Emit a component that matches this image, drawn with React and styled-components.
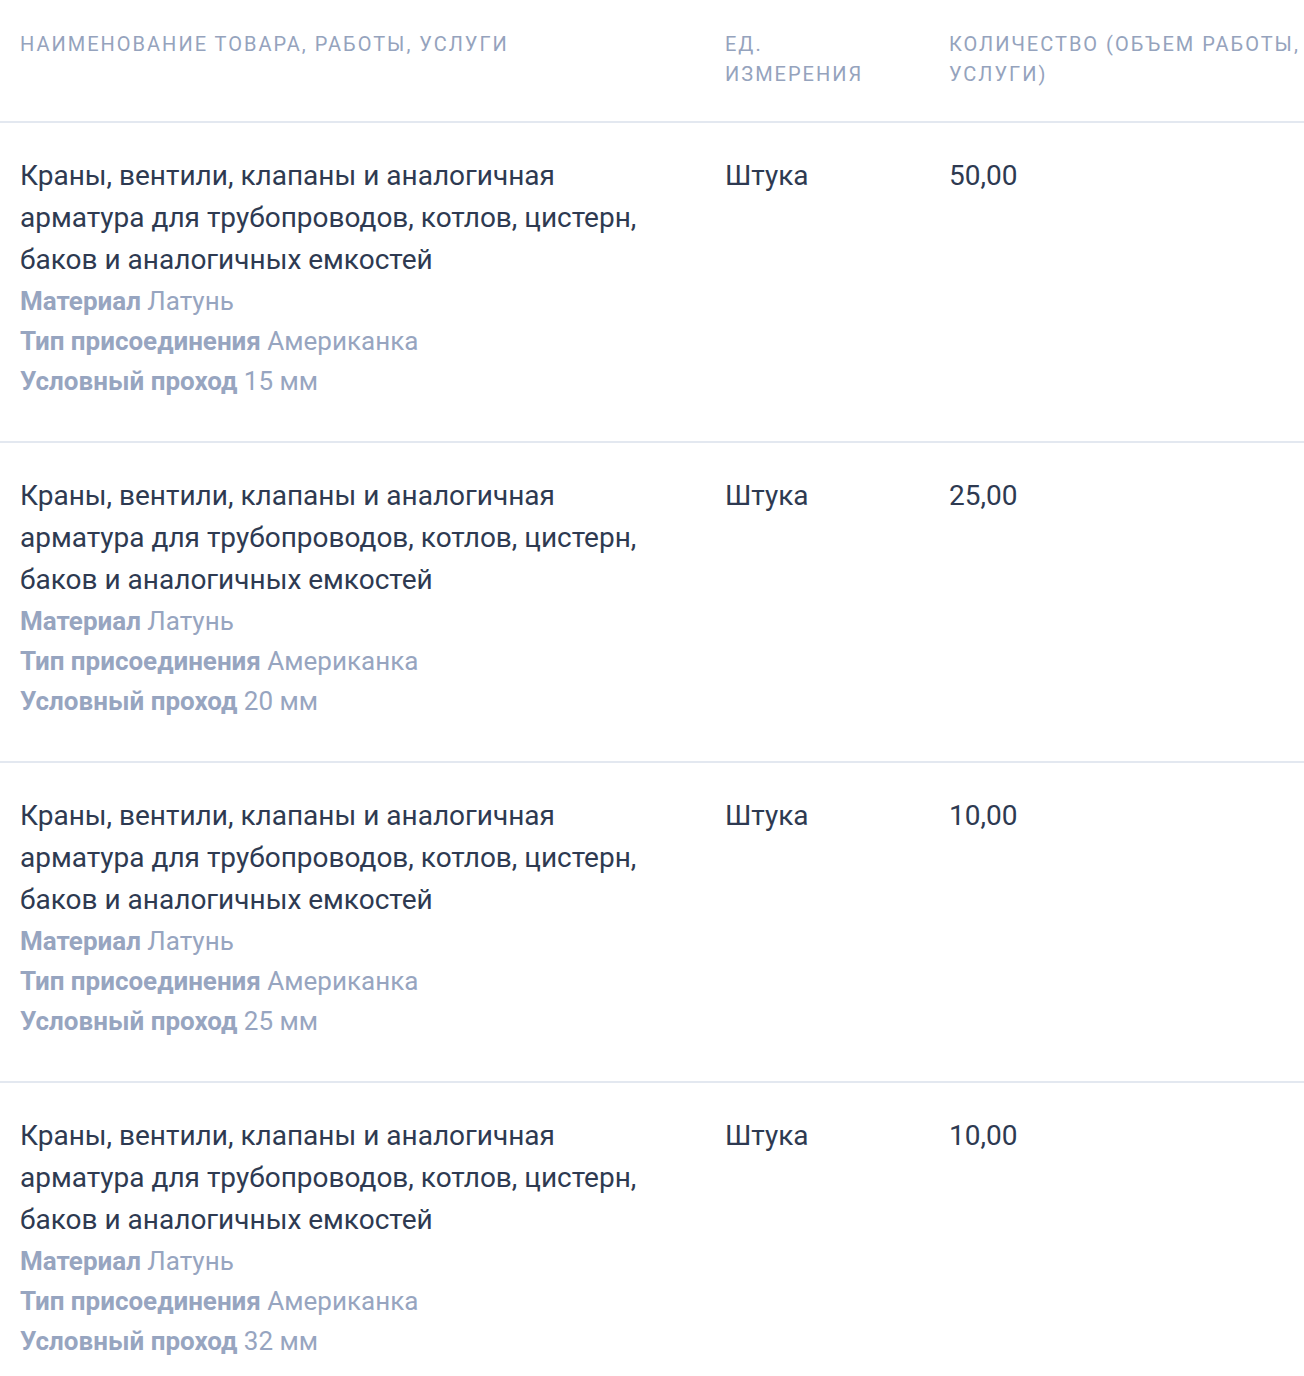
import React from "react";
import styled, { createGlobalStyle } from "styled-components";

const GlobalStyle = createGlobalStyle`
  html, body { margin: 0; padding: 0; background: #ffffff; }
  body { font-family: Roboto, "Noto Sans", "Liberation Sans", sans-serif; -webkit-font-smoothing: antialiased; }
  * { box-sizing: border-box; }
`;

const Table = styled.div`
  width: 1304px;
  overflow: hidden;
`;

const Row = styled.div`
  display: grid;
  grid-template-columns: 705px 224px 375px;
  border-bottom: ${(p) => (p.$last ? "none" : "2px solid #e3e8f0")};
  padding: ${(p) => (p.$head ? "29px 0 32px" : "32px 0 40px")};
`;

const cellPadding = (p) =>
  p.$first ? "0 20px" : p.$unit ? "0 44px 0 20px" : "0 0 0 20px";

const HeadCell = styled.div`
  padding: ${cellPadding};
  font-size: 20px;
  line-height: 30px;
  letter-spacing: 2px;
  text-transform: uppercase;
  color: #95a3bd;
  font-weight: 400;
`;

const Cell = styled.div`
  padding: ${cellPadding};
  font-size: 28px;
  line-height: 42px;
  color: #2e3a51;
`;

const Props = styled.div`
  display: flex;
  flex-direction: column;
`;

const Prop = styled.div`
  font-size: 26px;
  line-height: 40px;
  color: #97a5c0;
`;

const PropName = styled.span`
  font-weight: 700;
`;

const rows = [
  { qty: "50,00", dn: "15 мм" },
  { qty: "25,00", dn: "20 мм" },
  { qty: "10,00", dn: "25 мм" },
  { qty: "10,00", dn: "32 мм" },
];

export default function App() {
  return (
    <>
      <GlobalStyle />
      <Table>
        <Row $head>
          <HeadCell $first>Наименование товара, работы, услуги</HeadCell>
          <HeadCell $unit>Ед. измерения</HeadCell>
          <HeadCell>Количество (объем работы, услуги)</HeadCell>
        </Row>
        {rows.map((r, i) => (
          <Row key={i} $last={i === rows.length - 1}>
            <Cell $first>
              Краны, вентили, клапаны и аналогичная арматура для трубопроводов, котлов, цистерн, баков и аналогичных емкостей
              <Props>
                <Prop>
                  <PropName>Материал</PropName> Латунь
                </Prop>
                <Prop>
                  <PropName>Тип присоединения</PropName> Американка
                </Prop>
                <Prop>
                  <PropName>Условный проход</PropName> {r.dn}
                </Prop>
              </Props>
            </Cell>
            <Cell $unit>Штука</Cell>
            <Cell>{r.qty}</Cell>
          </Row>
        ))}
      </Table>
    </>
  );
}
